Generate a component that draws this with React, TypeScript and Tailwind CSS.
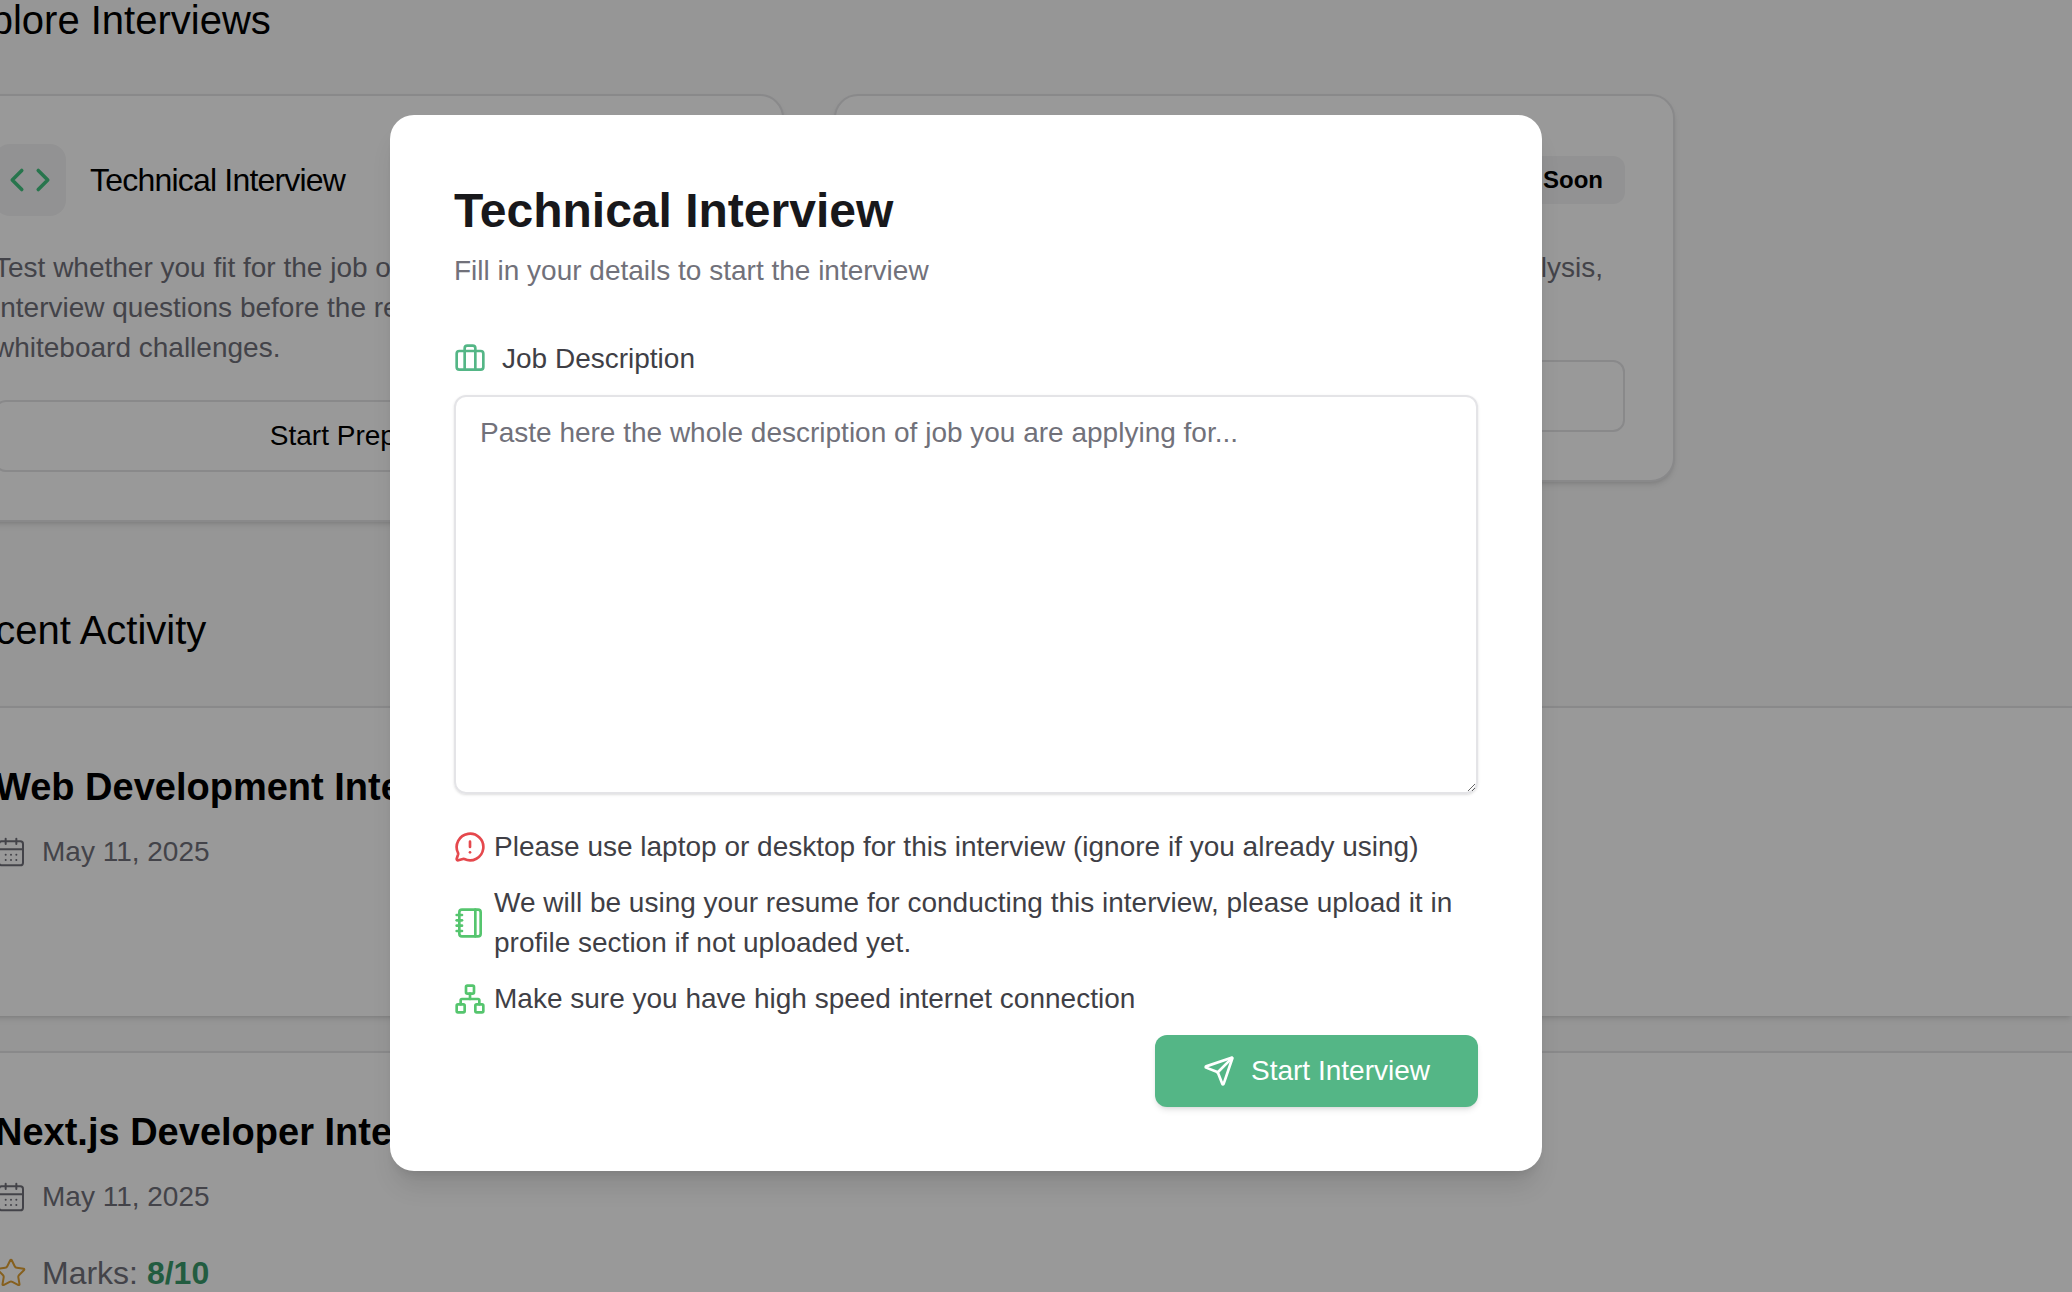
import { Briefcase, CalendarDays, ChevronLeft, ChevronRight, MessageCircleWarning, Network, Notebook, Send, Star } from 'lucide-react';

function ActivityRow({ title, marks }: { title: string; marks?: string }) {
  return (
    <div className="min-h-[310px] border-t-2 border-[#e4e4e7] bg-white px-[51px] pt-[59px] shadow-md">
      <h3 className="h-[40px] whitespace-nowrap text-[38px] leading-[40px] font-bold text-black">{title}</h3>
      <div className="mt-[30px] flex h-[30px] items-center gap-[15px] text-[28px] text-[#71717a]">
        <CalendarDays className="h-[32px] w-[32px]" strokeWidth={1.5} />
        <span>May 11, 2025</span>
      </div>
      {marks && (
        <div className="mt-[46px] flex h-[30px] items-center gap-[15px] text-[32px] text-[#71717a]">
          <Star className="h-[32px] w-[32px] text-[#dfa033]" strokeWidth={1.5} />
          <span>
            Marks: <span className="font-bold text-[#3a9a6c]">{marks}</span>
          </span>
        </div>
      )}
    </div>
  );
}

function Background() {
  return (
    <div className="ml-[-56px] mt-[-4px] w-[2128px]">
      <h2 className="h-[48px] text-[40px] leading-[48px] text-black">Explore Interviews</h2>
      <div className="mt-[50px] flex items-start gap-[50px]">
        <div className="w-[840px] rounded-[24px] border-2 border-[#e4e4e7] bg-white p-[48px] shadow-md">
          <div className="flex items-center gap-[24px]">
            <div className="flex h-[72px] w-[72px] items-center justify-center rounded-[16px] bg-zinc-100 text-[#43c481]">
              <ChevronLeft className="-mr-[6px] h-[38px] w-[38px]" strokeWidth={2.25} />
              <ChevronRight className="-ml-[6px] h-[38px] w-[38px]" strokeWidth={2.25} />
            </div>
            <h3 className="text-[32px] tracking-tight text-black">Technical Interview</h3>
          </div>
          <p className="mt-[32px] text-[28px] leading-[40px] text-[#71717a]">
            Test whether you fit for the job or not and practice real
            <br />
            interview questions before the real round, including
            <br />
            whiteboard challenges.
          </p>
          <button className="mt-[32px] h-[72px] w-full rounded-[12px] border-2 border-[#e4e4e7] text-[28px] text-black">
            Start Preparing
          </button>
        </div>
        <div className="w-[841px] rounded-[24px] border-2 border-[#e4e4e7] bg-white py-[48px] pl-[48px] pr-[48px] shadow-md">
          <div className="flex h-[72px] items-center justify-end">
            <span className="rounded-[12px] bg-zinc-100 px-[22px] py-[6px] text-[24px] font-bold text-black">Coming Soon</span>
          </div>
          <p className="mt-[32px] h-[80px] pr-[22px] text-right text-[28px] leading-[40px] text-[#71717a]">analysis,</p>
          <div className="mt-[32px] h-[72px] rounded-[12px] border-2 border-[#e4e4e7]" />
        </div>
      </div>
      <h2 className="mt-[84px] h-[48px] text-[40px] leading-[48px] text-black">Recent Activity</h2>
      <div className="mt-[52px] flex flex-col gap-[35px]">
        <ActivityRow title="Web Development Interview" />
        <ActivityRow title="Next.js Developer Interview" marks="8/10" />
      </div>
    </div>
  );
}

const notes = [
  { icon: <MessageCircleWarning className="h-[32px] w-[32px] shrink-0 text-[#e5484d]" strokeWidth={2} />, text: 'Please use laptop or desktop for this interview (ignore if you already using)' },
  { icon: <Notebook className="h-[32px] w-[32px] shrink-0 text-[#55c56e]" strokeWidth={2} />, text: 'We will be using your resume for conducting this interview, please upload it in profile section if not uploaded yet.' },
  { icon: <Network className="h-[32px] w-[32px] shrink-0 text-[#55c56e]" strokeWidth={2} />, text: 'Make sure you have high speed internet connection' },
];

export default function App() {
  return (
    <div className="relative h-[1292px] w-[2072px] overflow-hidden bg-[#fafafa] font-['Liberation_Sans',sans-serif]">
      <Background />
      <div className="absolute inset-0 bg-black/40" />
      <div className="absolute left-[390px] top-[115px] w-[1152px] rounded-[24px] bg-white p-[64px] shadow-xl">
        <h2 className="h-[64px] text-[48px] leading-[64px] font-bold text-[#18181b]">Technical Interview</h2>
        <p className="mt-[10px] h-[36px] text-[28px] leading-[36px] text-[#71717a]">Fill in your details to start the interview</p>
        <label className="mt-[52px] flex h-[36px] items-center gap-[16px] text-[28px] text-[#3f3f46]">
          <Briefcase className="h-[32px] w-[32px] text-[#54b686]" strokeWidth={2} />
          Job Description
        </label>
        <textarea
          className="mt-[18px] block h-[399px] w-full rounded-[12px] border-2 border-[#e4e4e7] px-[24px] py-[16px] text-[28px] leading-[40px] shadow-sm outline-none placeholder:text-[#71717a]"
          placeholder="Paste here the whole description of job you are applying for..."
        />
        <div className="mt-[33px] flex flex-col gap-[16px]">
          {notes.map((note, i) => (
            <div key={i} className="flex items-center gap-[8px] text-[28px] leading-[40px] text-[#3f3f46]">
              {note.icon}
              <span>{note.text}</span>
            </div>
          ))}
        </div>
        <div className="mt-[16px] flex justify-end">
          <button className="flex h-[72px] w-[323px] items-center justify-center gap-[16px] rounded-[12px] bg-[#54b686] text-[28px] text-white shadow-md">
            <Send className="h-[32px] w-[32px]" strokeWidth={2} />
            Start Interview
          </button>
        </div>
      </div>
    </div>
  );
}
